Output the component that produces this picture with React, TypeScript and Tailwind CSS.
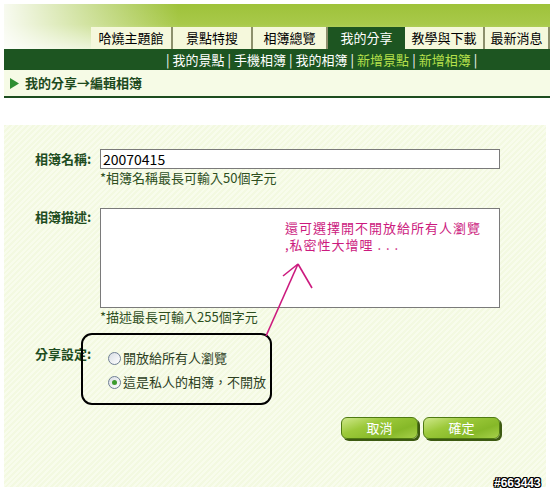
import React from "react";

const font = { fontFamily: '"Noto Sans CJK TC", "Liberation Sans", sans-serif' };

function Radio({ checked }: { checked?: boolean }) {
  return (
    <span className="relative inline-flex h-[13px] w-[13px] items-center justify-center rounded-full border border-[#6f7f95] bg-[linear-gradient(135deg,#d8dde4,#ffffff)]">
      {checked && <span className="h-[5px] w-[5px] rounded-full bg-[#3c9b2e]" />}
    </span>
  );
}

function Btn({ label }: { label: string }) {
  return (
    <div className="flex h-[22px] w-[77px] items-center justify-center rounded-[6px] border border-[#4f7a12] bg-[linear-gradient(160deg,#cfe88a_0%,#9cc93a_35%,#86b828_70%,#a6d04a_100%)] text-[13px] leading-[16px] text-white shadow-[2px_2px_0_#3d5a12]">
      {label}
    </div>
  );
}

export default function App() {
  const tabs = [
    { t: "哈燒主題館", w: 82 },
    { t: "景點特搜", w: 80 },
    { t: "相簿總覽", w: 75 },
    { t: "我的分享", w: 77, active: true },
    { t: "教學與下載", w: 80 },
    { t: "最新消息", w: 65 },
  ];
  return (
    <div className="relative h-[492px] w-[550px] overflow-hidden bg-white pl-[4px] pt-[4px]" style={font}>
      {/* header */}
      <div className="flex h-[45px] items-end bg-[linear-gradient(to_right,rgba(255,255,255,0.92)_0%,rgba(255,255,255,0.4)_18%,rgba(255,255,255,0)_32%),linear-gradient(to_bottom,#9ec23a_0%,#a8c94a_45%,#dfeebd_100%)] pl-[87px]">
        {tabs.map((tab) => (
          <div
            key={tab.t}
            style={{ width: tab.w }}
            className={
              tab.active
                ? "flex h-[22px] items-center justify-center bg-[#1d5521] text-[13px] text-white"
                : "flex h-[22px] items-center justify-center border-r-2 border-[#8c8f6c] bg-[#f5f8dc] text-[13px] text-black"
            }
          >
            {tab.t}
          </div>
        ))}
      </div>
      <div className="flex h-[21px] items-center bg-[#1d5521] pl-[159px] text-[13px] text-white">
        <span className="px-[3px]">|</span>
        <span>我的景點</span>
        <span className="px-[3px]">|</span>
        <span>手機相簿</span>
        <span className="px-[3px]">|</span>
        <span>我的相簿</span>
        <span className="px-[3px]">|</span>
        <span className="text-[#b6e04c]">新增景點</span>
        <span className="px-[3px]">|</span>
        <span className="text-[#b6e04c]">新增相簿</span>
        <span className="px-[3px]">|</span>
      </div>
      {/* breadcrumb */}
      <div className="flex h-[28px] items-center border-b-2 border-[#1d4d1f] bg-[#f6fbe6] pl-[6px] text-[13px] font-bold text-[#1d4a1d]">
        <svg width="9" height="11" viewBox="0 0 9 11" className="mr-[6px]">
          <polygon points="0,0 9,5.5 0,11" fill="#2f8f33" />
        </svg>
        <span>我的分享→編輯相簿</span>
      </div>
      <div className="h-[27px]" />
      {/* form area */}
      <div className="mr-[4px] h-[362px] bg-[repeating-linear-gradient(135deg,#f3f9e1_0px,#f3f9e1_2px,#f8fcec_2px,#f8fcec_4px)] pt-[24px] text-[13px] leading-[16px]">
        <div className="flex">
          <div className="w-[96px] pl-[31px] pt-[2px] font-bold text-[#1f4d1f]">相簿名稱:</div>
          <div>
            <div className="flex h-[20px] w-[400px] items-center border border-[#7a7a7a] bg-white pl-[2px] text-[14px] text-black">20070415</div>
            <div className="mt-[1px] text-[#2d4f1e]">*相簿名稱最長可輸入50個字元</div>
          </div>
        </div>
        <div className="mt-[22px] flex">
          <div className="w-[96px] pl-[31px] pt-[1px] font-bold text-[#1f4d1f]">相簿描述:</div>
          <div>
            <div className="h-[100px] w-[400px] border border-[#7a7a7a] bg-white" />
            <div className="mt-[1px] text-[#2d4f1e]">*描述最長可輸入255個字元</div>
          </div>
        </div>
        <div className="mt-[21px] flex">
          <div className="w-[96px] pl-[31px] font-bold text-[#1f4d1f]">分享設定:</div>
          <div className="flex flex-col gap-[8px] pl-[8px] pt-[4px] text-[#2d3f1e]">
            <label className="flex items-center gap-[2px]">
              <Radio />
              <span>開放給所有人瀏覽</span>
            </label>
            <label className="flex items-center gap-[2px]">
              <Radio checked />
              <span>這是私人的相簿，不開放</span>
            </label>
          </div>
        </div>
        <div className="mr-[46px] mt-[27px] flex justify-end gap-[5px]">
          <Btn label="取消" />
          <Btn label="確定" />
        </div>
      </div>

      {/* annotations */}
      <svg className="pointer-events-none absolute left-0 top-0" width="550" height="492" viewBox="0 0 550 492">
        <rect x="82" y="334" width="189" height="70" rx="10" ry="10" fill="none" stroke="#000" strokeWidth="2" />
        <line x1="266" y1="336" x2="298" y2="264" stroke="#cc1a7e" strokeWidth="1.6" />
        <line x1="298" y1="264" x2="283" y2="276" stroke="#cc1a7e" strokeWidth="1.6" />
        <line x1="298" y1="264" x2="312" y2="288" stroke="#cc1a7e" strokeWidth="1.6" />
      </svg>
      <div className="absolute left-[285px] top-[219px] text-[13px] leading-[17px] tracking-[1px] text-[#cc1a7e]">
        <div>還可選擇開不開放給所有人瀏覽</div>
        <div>,私密性大增哩 . . .</div>
      </div>
      <div
        className="absolute left-[494px] top-[476px] text-[12px] font-bold leading-[14px] text-white"
        style={{ fontFamily: '"Liberation Sans", sans-serif', textShadow: "1px 0 #000,-1px 0 #000,0 1px #000,0 -1px #000,1px 1px #000,-1px -1px #000,1px -1px #000,-1px 1px #000" }}
      >
        #663443
      </div>
    </div>
  );
}
